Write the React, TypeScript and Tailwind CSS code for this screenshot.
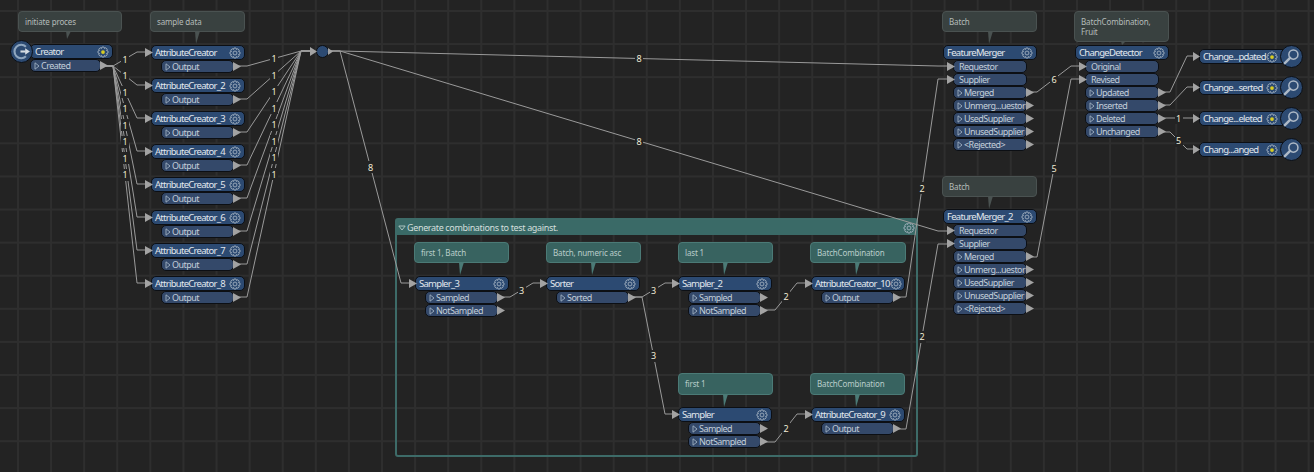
import type { ReactNode } from "react"

const FONT = "[font-family:'Noto_Sans',sans-serif]"

type Note = { x: number; y: number; w: number; h: number; text: string[]; px: number; tail: number; teal?: boolean }
type Node = { x: number; y: number; w: number; name: string; portW: number; ports: Port[]; dot?: boolean; pad?: number }
type Port = { name: string; dir: "in" | "out" }
type Wire = { pts: [number, number][]; label?: string }

const notes: Note[] = [
  { x: 18, y: 11, w: 104, h: 21, text: ["initiate proces"], px: 65, tail: 7 },
  { x: 150, y: 11, w: 95, h: 21, text: ["sample data"], px: 194, tail: 12 },
  { x: 942, y: 11, w: 95, h: 21, text: ["Batch"], px: 987, tail: 12 },
  { x: 1074, y: 11, w: 95, h: 31, text: ["BatchCombination,", "Fruit"], px: 1120, tail: 3 },
  { x: 942, y: 176, w: 95, h: 21, text: ["Batch"], px: 987, tail: 12 },
  { x: 414, y: 242, w: 95, h: 21, text: ["first 1, Batch"], px: 458, tail: 12, teal: true },
  { x: 546, y: 242, w: 95, h: 21, text: ["Batch, numeric asc"], px: 590, tail: 12, teal: true },
  { x: 678, y: 242, w: 95, h: 21, text: ["last 1"], px: 722, tail: 12, teal: true },
  { x: 810, y: 242, w: 96, h: 21, text: ["BatchCombination"], px: 854, tail: 12, teal: true },
  { x: 678, y: 373, w: 95, h: 22, text: ["first 1"], px: 722, tail: 12, teal: true },
  { x: 810, y: 373, w: 95, h: 22, text: ["BatchCombination"], px: 854, tail: 12, teal: true },
]

const outp = (...names: string[]): Port[] => names.map((name) => ({ name, dir: "out" }))
const inp = (...names: string[]): Port[] => names.map((name) => ({ name, dir: "in" }))

const mergerPorts = [...inp("Requestor", "Supplier"), ...outp("Merged", "Unmerg...uestor", "UsedSupplier", "UnusedSupplier", "<Rejected>")]
const samplerPorts = outp("Sampled", "NotSampled")

const attrNames = ["AttributeCreator", "AttributeCreator_2", "AttributeCreator_3", "AttributeCreator_4", "AttributeCreator_5", "AttributeCreator_6", "AttributeCreator_7", "AttributeCreator_8"]

const nodes: Node[] = [
  { x: 30, y: 44, w: 83, name: "Creator", portW: 71, ports: outp("Created"), dot: true, pad: 4 },
  ...attrNames.map((name, i) => ({ x: 151, y: 45 + i * 33, w: 94, name, portW: 73, ports: outp("Output") })),
  { x: 943, y: 45, w: 94, name: "FeatureMerger", portW: 74, ports: mergerPorts },
  { x: 1075, y: 45, w: 94, name: "ChangeDetector", portW: 74, ports: [...inp("Original", "Revised"), ...outp("Updated", "Inserted", "Deleted", "Unchanged")] },
  { x: 943, y: 209, w: 94, name: "FeatureMerger_2", portW: 74, ports: mergerPorts },
  { x: 415, y: 276, w: 94, name: "Sampler_3", portW: 73, ports: samplerPorts },
  { x: 546, y: 276, w: 94, name: "Sorter", portW: 73, ports: outp("Sorted") },
  { x: 678, y: 276, w: 94, name: "Sampler_2", portW: 73, ports: samplerPorts },
  { x: 811, y: 276, w: 94, name: "AttributeCreator_10", portW: 73, ports: outp("Output") },
  { x: 678, y: 407, w: 94, name: "Sampler", portW: 73, ports: samplerPorts },
  { x: 811, y: 407, w: 94, name: "AttributeCreator_9", portW: 73, ports: outp("Output") },
]

const inspectors = [
  { y: 56, name: "Change...pdated" },
  { y: 87, name: "Change...serted" },
  { y: 118, name: "Change...eleted" },
  { y: 149, name: "Chang...anged" },
]

const wires: Wire[] = [
  ...attrNames.flatMap((_, i): Wire[] => [
    { pts: [[104, 66], [113, 66], [137, 52 + i * 33], [146, 52 + i * 33]], label: "1" },
    { pts: [[236, 66 + i * 33], [247, 66 + i * 33], [301, 51], [311, 51]], label: "1" },
  ]),
  { pts: [[330, 51], [340, 51], [938, 66], [948, 66]], label: "8" },
  { pts: [[330, 51], [340, 51], [938, 231], [948, 231]], label: "8" },
  { pts: [[330, 51], [340, 51], [401, 283], [410, 283]], label: "8" },
  { pts: [[500, 297], [510, 297], [533, 283], [541, 283]], label: "3" },
  { pts: [[632, 297], [642, 297], [665, 283], [673, 283]], label: "3" },
  { pts: [[632, 297], [642, 297], [665, 414], [673, 414]], label: "3" },
  { pts: [[764, 310], [775, 310], [797, 283], [806, 283]], label: "2" },
  { pts: [[764, 442], [775, 442], [797, 414], [806, 414]], label: "2" },
  { pts: [[896, 297], [906, 297], [938, 79], [948, 79]], label: "2" },
  { pts: [[896, 429], [906, 429], [938, 244], [948, 244]], label: "2" },
  { pts: [[1028, 92], [1037, 92], [1071, 66], [1080, 66]], label: "6" },
  { pts: [[1028, 257], [1037, 257], [1071, 79], [1080, 79]], label: "5" },
  { pts: [[1160, 92], [1170, 92], [1187, 56], [1194, 56]] },
  { pts: [[1160, 105], [1170, 105], [1187, 87], [1194, 87]] },
  { pts: [[1160, 118], [1170, 118], [1187, 118], [1194, 118]], label: "1" },
  { pts: [[1160, 132], [1170, 132], [1187, 149], [1194, 149]], label: "5" },
]

// 8 tooth cog outline, same for all nodes
const cogPath = (() => {
  const out: string[] = []
  for (let i = 0; i < 8; i++) {
    const a = (i * Math.PI) / 4 - Math.PI / 2
    const pts = [
      [5.2, a - 0.42],
      [6.8, a - 0.2],
      [6.8, a + 0.2],
      [5.2, a + 0.42],
    ]
    pts.forEach(([r, t]) => out.push(`${(8 + r * Math.cos(t)).toFixed(2)} ${(8 + r * Math.sin(t)).toFixed(2)}`))
  }
  return "M" + out.join("L") + "Z"
})()

function Gear({ dot, className }: { dot?: boolean; className?: string }) {
  return (
    <svg viewBox="0 0 16 16" className={`h-[12px] w-[12px] shrink-0 ${className ?? ""}`} fill="none" stroke="#a9b6c4" strokeWidth="1.1">
      <path d={cogPath} strokeLinejoin="round" />
      {dot ? <circle cx="8" cy="8" r="2.5" fill="#d8cc22" stroke="none" /> : <circle cx="8" cy="8" r="2.6" />}
    </svg>
  )
}

function Triangle() {
  return (
    <svg viewBox="0 0 6 8" className="h-[8px] w-[6px] shrink-0" fill="none" stroke="#9fb0c2" strokeWidth="0.9">
      <path d="M1 .8 5 4 1 7.2Z" strokeLinejoin="round" />
    </svg>
  )
}

function Arrow({ className }: { className: string }) {
  return <div className={`absolute top-[2px] h-[9px] w-[8px] bg-[#a3a3a3] [clip-path:polygon(0_0,100%_50%,0_100%)] ${className}`} />
}

function PortRow({ port, width }: { port: Port; width: number }) {
  const isIn = port.dir === "in"
  return (
    <div style={{ width }} className="relative h-[13px]">
      <div className="flex h-full items-center gap-[1px] rounded-[5px] border border-[#0c0f14] bg-[#34496a] pl-[3px] text-[9px] leading-none tracking-[-0.55px] text-[#c3ced9]">
        {isIn ? <span className="w-[1px]" /> : <Triangle />}
        <span className="whitespace-nowrap">{port.name}</span>
      </div>
      {isIn ? <Arrow className="left-[-6px]" /> : <Arrow className="right-[-7px]" />}
    </div>
  )
}

function Transformer({ node }: { node: Node }) {
  const hasIn = node.name !== "Creator" && !node.ports.some((p) => p.dir === "in")
  return (
    <div style={{ left: node.x, top: node.y, width: node.w }} className="absolute flex flex-col">
      <div className="relative flex h-[15px] items-center justify-between rounded-[5px] border border-[#0c0f14] bg-[#2c4a72] pr-[3px]" style={{ paddingLeft: node.pad ?? 3 }}>
        <span className="whitespace-nowrap text-[9.5px] leading-none tracking-[-0.72px] text-[#e1e7ed]">{node.name}</span>
        <Gear dot={node.dot} />
        {hasIn && <Arrow className="left-[-7px]" />}
      </div>
      <div className="flex flex-col" style={{ paddingLeft: node.name === "Creator" ? 0 : 10 }}>
        {node.ports.map((p) => (
          <PortRow key={p.name} port={p} width={node.portW} />
        ))}
      </div>
    </div>
  )
}

function Inspector({ y, name }: { y: number; name: string }) {
  return (
    <div style={{ top: y - 7 }} className="absolute left-[1199px] flex h-[15px] w-[86px] items-center rounded-l-[5px] border border-[#0c0f14] bg-[#2c4a72] pl-[3px]">
      <span className="whitespace-nowrap text-[9.5px] leading-none tracking-[-0.72px] text-[#e1e7ed]">{name}</span>
      <Gear dot className="absolute right-[6px]" />
      <div className="absolute left-[-7px] top-[2px] h-[9px] w-[7px] bg-[#a3a3a3] [clip-path:polygon(0_0,100%_50%,0_100%)]" />
      <div className="absolute left-[80px] top-[-5px] flex h-[23px] w-[23px] items-center justify-center rounded-full border border-[#0c0f14] bg-[#2c4a72]">
        <svg viewBox="0 0 20 20" className="h-[19px] w-[19px]" fill="none" stroke="#aeb9c6">
          <circle cx="12" cy="8" r="4.8" strokeWidth="1.6" />
          <path d="M8.5 11.5 3 17" strokeWidth="2.6" strokeLinecap="round" />
        </svg>
      </div>
    </div>
  )
}

function NoteBox({ note }: { note: Note }) {
  const tone = note.teal ? "border-[#4b7a76] bg-[#386360] text-[#b9cdca]" : "border-[#4a5251] bg-[#394140] text-[#b4bbb9]"
  const tail = note.teal ? "bg-[#4b7a76]" : "bg-[#4a5251]"
  return (
    <div style={{ left: note.x, top: note.y, width: note.w, height: note.h }} className={`absolute flex flex-col justify-center rounded-[4px] border px-[6px] text-[8px] leading-[10px] tracking-[-0.15px] ${tone}`}>
      {note.text.map((t) => (
        <span key={t} className="whitespace-nowrap">{t}</span>
      ))}
      <div style={{ left: note.px - note.x, height: note.tail + 1 }} className={`absolute top-full w-[5px] [clip-path:polygon(0_0,100%_0,20%_100%)] ${tail}`} />
    </div>
  )
}

function Bookmark({ children }: { children?: ReactNode }) {
  return (
    <div className="absolute left-[395px] top-[218px] h-[239px] w-[523px] rounded-[3px] border-2 border-[#3d6b68]">
      <div className="flex h-[15px] items-center gap-[1px] bg-[#3a6a67] pl-[1px] pr-[1px] text-[9px] leading-none tracking-[-0.35px] text-[#d3dfdd]">
        <svg viewBox="0 0 8 6" className="h-[6px] w-[8px]" fill="none" stroke="#b8cdca" strokeWidth="0.9">
          <path d="M.8 1 4 5 7.2 1Z" strokeLinejoin="round" />
        </svg>
        <span className="flex-1 whitespace-nowrap">Generate combinations to test against.</span>
        <Gear />
      </div>
      {children}
    </div>
  )
}

function WireLayer() {
  return (
    <svg className="absolute inset-0 h-full w-full" fill="none" stroke="#9a9a9a" strokeWidth="1">
      {wires.map((w, i) => (
        <polyline key={i} points={w.pts.map((p) => p.join(",")).join(" ")} strokeLinejoin="round" />
      ))}
    </svg>
  )
}

function WireLabels() {
  return (
    <>
      {wires.filter((w) => w.label).map((w, i) => {
        const [a, b] = [w.pts[1], w.pts[2]]
        return (
          <span
            key={i}
            style={{ left: (a[0] + b[0]) / 2 - 4, top: (a[1] + b[1]) / 2 - 6 }}
            className="absolute flex h-[12px] w-[8px] items-center justify-center bg-[#232323] text-[9px] leading-none text-[#f1ecd6]"
          >
            {w.label}
          </span>
        )
      })}
    </>
  )
}

export default function App() {
  return (
    <div className={`relative h-[472px] w-[1314px] overflow-hidden bg-[#232323] bg-[linear-gradient(#2e2e2e_2px,transparent_2px),linear-gradient(90deg,#2e2e2e_2px,transparent_2px)] bg-[size:33.1px_33.1px] bg-[position:17px_10px] ${FONT}`}>
      <Bookmark />
      {notes.map((n) => (
        <NoteBox key={n.x + "-" + n.y} note={n} />
      ))}
      <WireLayer />

      {/* creator start circle */}
      <div className="absolute left-[10px] top-[40px] z-10 flex h-[23px] w-[23px] items-center justify-center rounded-full border border-[#0c0f14] bg-[#2c4a72]">
        <svg viewBox="0 0 20 20" className="h-[21px] w-[21px]" fill="none" stroke="#8fa6bf" strokeWidth="2">
          <path d="M14.2 5.4A6.4 6.4 0 1 0 14.2 14.6" />
          <path d="M9 10h5" stroke="#d5dce3" />
          <path d="M13.5 6.8 18 10l-4.5 3.2Z" fill="#d5dce3" stroke="none" />
        </svg>
      </div>

      {nodes.map((n) => (
        <Transformer key={n.name} node={n} />
      ))}
      {inspectors.map((i) => (
        <Inspector key={i.name} y={i.y} name={i.name} />
      ))}

      {/* junction */}
      <div className="absolute left-[316px] top-[45px] h-[13px] w-[13px] rounded-full border border-[#0c0f14] bg-[#2c4a72]" />
      <div className="absolute left-[310px] top-[47px] h-[9px] w-[7px] bg-[#a3a3a3] [clip-path:polygon(0_0,100%_50%,0_100%)]" />
      <div className="absolute left-[328px] top-[48px] h-[7px] w-[5px] bg-[#a3a3a3] [clip-path:polygon(0_0,100%_50%,0_100%)]" />

      <WireLabels />
    </div>
  )
}
